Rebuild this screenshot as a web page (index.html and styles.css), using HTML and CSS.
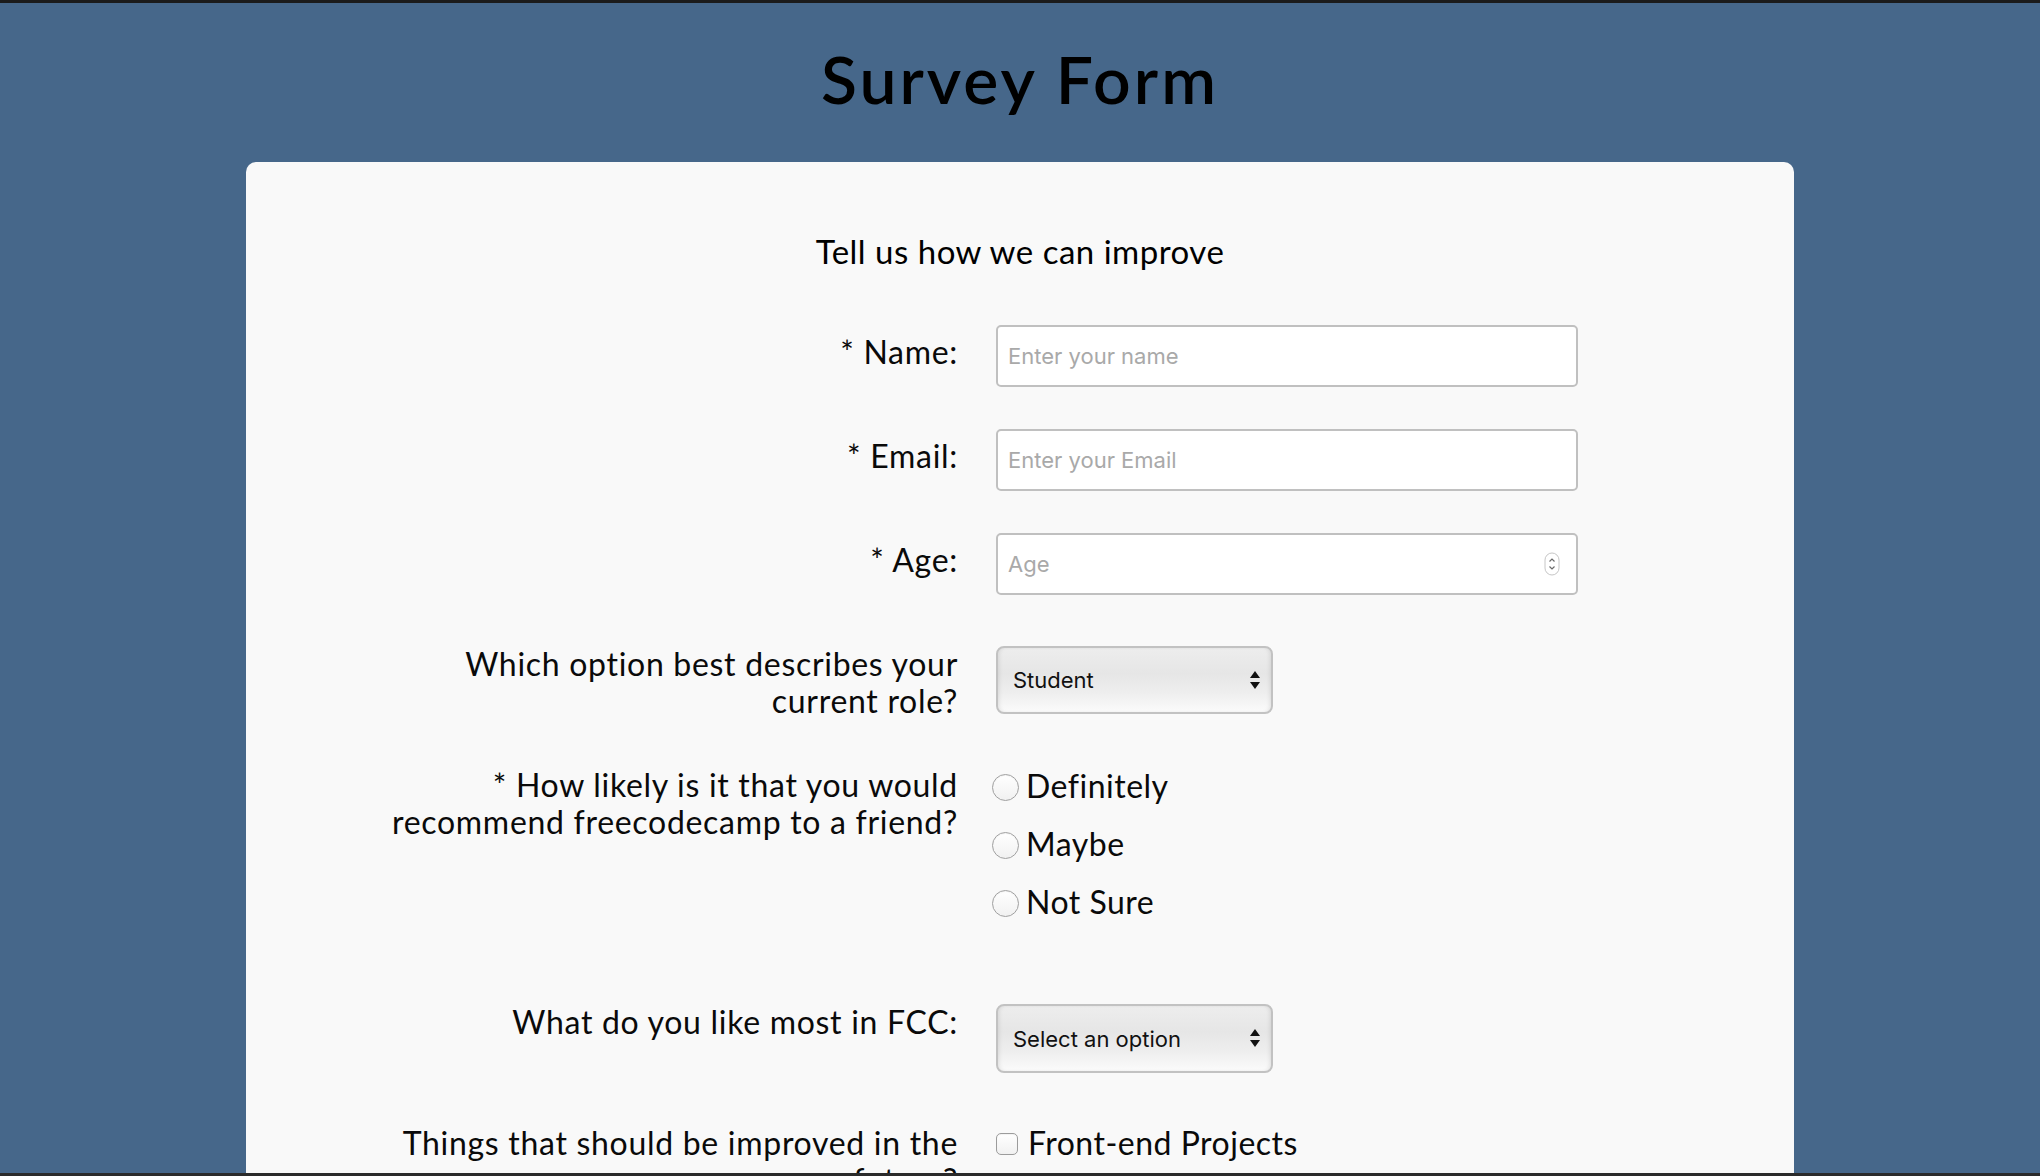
FILE: index.html
```html
<!DOCTYPE html>
<html lang="en">
<head>
<meta charset="utf-8">
<title>Survey Form</title>
<link rel="stylesheet" href="styles.css">
</head>
<body>
<h1 id="title" class="title">Survey Form</h1>
<main class="card">
  <p id="description" class="description">Tell us how we can improve</p>
  <form id="survey-form" class="form">
    <div class="row row-text">
      <label class="label" for="name">* Name:</label>
      <div class="control"><input class="field" id="name" type="text" placeholder="Enter your name"></div>
    </div>
    <div class="row row-text">
      <label class="label" for="email">* Email:</label>
      <div class="control"><input class="field" id="email" type="email" placeholder="Enter your Email"></div>
    </div>
    <div class="row row-text">
      <label class="label" for="number">* Age:</label>
      <div class="control number-wrap">
        <input class="field" id="number" type="number" placeholder="Age">
        <svg class="spinner" width="16" height="24" viewBox="0 0 16 24" aria-hidden="true">
          <rect x="1" y="1" width="14" height="22" rx="7" fill="#fff" stroke="#c6c6c6"/>
          <path d="M5.5 9.5 L8 7 L10.5 9.5" fill="none" stroke="#6a6a6a" stroke-width="1.2"/>
          <path d="M5.5 14.5 L8 17 L10.5 14.5" fill="none" stroke="#6a6a6a" stroke-width="1.2"/>
        </svg>
      </div>
    </div>
    <div class="row row-role">
      <label class="label" for="dropdown">Which option best describes your<br>current role?</label>
      <div class="control select-wrap">
        <select class="select" id="dropdown">
          <option>Student</option>
          <option>Full Time Job</option>
          <option>Full Time Learner</option>
          <option>Prefer not to say</option>
          <option>Other</option>
        </select>
        <svg class="arrows" width="10" height="18" viewBox="0 0 10 18" aria-hidden="true">
          <path d="M5 0 L10 7 L0 7 Z" fill="#111"/>
          <path d="M0 11 L10 11 L5 18 Z" fill="#111"/>
        </svg>
      </div>
    </div>
    <div class="row row-radio">
      <div class="label">* How likely is it that you would<br>recommend freecodecamp to a friend?</div>
      <div class="control options options-radio">
        <label class="option"><input class="radio" type="radio" name="recommend" value="definitely">Definitely</label>
        <label class="option"><input class="radio" type="radio" name="recommend" value="maybe">Maybe</label>
        <label class="option"><input class="radio" type="radio" name="recommend" value="not-sure">Not Sure</label>
      </div>
    </div>
    <div class="row row-fcc">
      <label class="label" for="most-like">What do you like most in FCC:</label>
      <div class="control select-wrap">
        <select class="select select-fcc" id="most-like">
          <option>Select an option</option>
          <option>Challenges</option>
          <option>Projects</option>
          <option>Community</option>
          <option>Open Source</option>
        </select>
        <svg class="arrows" width="10" height="18" viewBox="0 0 10 18" aria-hidden="true">
          <path d="M5 0 L10 7 L0 7 Z" fill="#111"/>
          <path d="M0 11 L10 11 L5 18 Z" fill="#111"/>
        </svg>
      </div>
    </div>
    <div class="row row-check">
      <div class="label">Things that should be improved in the<br>future?</div>
      <div class="control options options-check">
        <label class="option"><input class="checkbox" type="checkbox" value="front-end">Front-end Projects</label>
        <label class="option"><input class="checkbox" type="checkbox" value="back-end">Back-end Projects</label>
        <label class="option"><input class="checkbox" type="checkbox" value="data-vis">Data Visualization</label>
        <label class="option"><input class="checkbox" type="checkbox" value="challenges">Challenges</label>
        <label class="option"><input class="checkbox" type="checkbox" value="community">Open Source Community</label>
      </div>
    </div>
    <div class="row row-comments">
      <label class="label" for="comments">Any Comments or Suggestions?</label>
      <div class="control"><textarea class="comments" id="comments" placeholder="Enter your comment here..."></textarea></div>
    </div>
    <div class="submit-row"><button class="submit" id="submit" type="submit">Submit</button></div>
  </form>
</main>
</body>
</html>
```

FILE: styles.css
```css
* {
  box-sizing: border-box;
}

html,
body {
  margin: 0;
  padding: 0;
}

body {
  background: #46678a;
  font-family: Lato, "Open Sans", sans-serif;
  color: #000;
}

body::before,
body::after {
  content: "";
  position: fixed;
  left: 0;
  right: 0;
  height: 3px;
  z-index: 10;
}

body::before {
  top: 0;
  background: #1b1b1b;
}

body::after {
  bottom: 0;
  background: #2b2b2b;
}

.title {
  margin: 41px 0 0;
  font-size: 66px;
  line-height: 76px;
  font-weight: 600;
  letter-spacing: 3px;
  text-align: center;
}

.card {
  width: 1548px;
  margin: 45px auto 0;
  background: #f9f9f9;
  border-radius: 10px;
  padding: 69px 0 80px;
}

.description {
  margin: 0;
  font-size: 33px;
  line-height: 40px;
  letter-spacing: 0.5px;
  text-align: center;
  color: #000;
}

.form {
  margin-top: 54px;
  display: flex;
  flex-direction: column;
}

.row {
  display: grid;
  grid-template-columns: 712px 1fr;
  column-gap: 38px;
  align-items: start;
}

.label {
  text-align: right;
  font-size: 32px;
  line-height: 37px;
  letter-spacing: 0.7px;
  color: #0a0a0a;
}

.row-text + .row-text {
  margin-top: 42px;
}

.row-text .label {
  padding-top: 8px;
}

.row-role {
  margin-top: 50px;
}

.row-radio {
  margin-top: 47px;
}

.row-fcc {
  margin-top: 83px;
}

.row-check {
  margin-top: 51px;
}

.row-comments {
  margin-top: 50px;
}

.field {
  display: block;
  width: 582px;
  height: 62px;
  margin: 0;
  border: 2px solid #c0c0c0;
  border-radius: 5px;
  background: #fff;
  padding: 0 10px;
  font: 22px Inter, "Noto Sans", sans-serif;
  color: #222;
  outline: none;
}

.field::placeholder {
  color: #a9a9a9;
}

.field[type="number"] {
  -moz-appearance: textfield;
}

.field::-webkit-inner-spin-button,
.field::-webkit-outer-spin-button {
  -webkit-appearance: none;
  margin: 0;
}

.number-wrap,
.select-wrap {
  position: relative;
  width: max-content;
}

.spinner {
  position: absolute;
  left: 548px;
  top: 19px;
}

.select {
  display: block;
  -webkit-appearance: none;
  appearance: none;
  width: 277px;
  height: 68px;
  margin: 1px 0 0;
  border: 2px solid #c2c2c2;
  border-radius: 8px;
  background: linear-gradient(to bottom, #ededed 0%, #e6e6e6 40%, #eeeeee 70%, #fbfbfb 100%);
  box-shadow: inset 3px 0 4px -2px rgba(0, 0, 0, 0.1), inset -3px 0 4px -2px rgba(0, 0, 0, 0.1);
  padding: 0 0 0 15px;
  font: 22px Inter, "Noto Sans", sans-serif;
  color: #111;
  outline: none;
}

.select-fcc {
  height: 69px;
}

.arrows {
  position: absolute;
  left: 254px;
  top: 26px;
}

.options {
  display: flex;
  flex-direction: column;
}

.options-radio {
  padding-top: 1px;
  gap: 21px;
}

.options-check {
  gap: 21px;
}

.option {
  display: flex;
  align-items: flex-start;
  font-size: 32px;
  line-height: 37px;
  letter-spacing: 0.5px;
  color: #0a0a0a;
}

.radio {
  -webkit-appearance: none;
  appearance: none;
  flex: none;
  width: 27px;
  height: 27px;
  margin: 7px 7px 0 -4px;
  border: 1px solid #a0a0a0;
  border-radius: 50%;
  background: linear-gradient(to bottom, #ffffff, #f1f1f1);
  box-shadow: inset 0 1px 1px rgba(0, 0, 0, 0.05);
}

.checkbox {
  -webkit-appearance: none;
  appearance: none;
  flex: none;
  width: 22px;
  height: 22px;
  margin: 9px 10px 0 0;
  border: 1px solid #9c9c9c;
  border-radius: 5px;
  background: linear-gradient(to bottom, #ffffff, #f1f1f1);
  box-shadow: inset 0 1px 1px rgba(0, 0, 0, 0.05);
}

.comments {
  display: block;
  width: 582px;
  height: 180px;
  border: 2px solid #c0c0c0;
  border-radius: 5px;
  padding: 10px;
  font: 22px Inter, "Noto Sans", sans-serif;
  resize: vertical;
}

.submit-row {
  display: flex;
  justify-content: center;
  margin-top: 50px;
}

.submit {
  font: 28px Lato, sans-serif;
  padding: 14px 60px;
  border: none;
  border-radius: 6px;
  background: #37af65;
  color: #fff;
}
```
